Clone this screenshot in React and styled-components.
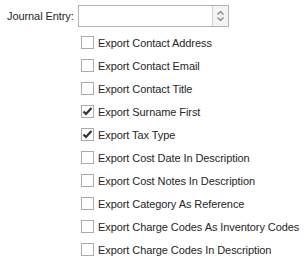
import React from "react";
import styled, { createGlobalStyle } from "styled-components";

const Global = createGlobalStyle`
  html, body { margin: 0; padding: 0; background: #fff; }
  body { font-family: "Liberation Sans", Arial, sans-serif; font-size: 11px; color: #262626; letter-spacing: -0.08px; }
`;

const Page = styled.div`
  padding: 5px 0 0 7px;
  display: flex;
  flex-direction: column;
`;

const FieldRow = styled.div`
  display: flex;
  align-items: center;
  height: 22px;
`;

const Label = styled.label`
  width: 71px;
`;

const SpinBox = styled.div`
  width: 151px;
  height: 22px;
  box-sizing: border-box;
  border: 1px solid #b4b4b4;
  display: flex;
  background: #fff;
`;

const SpinInput = styled.div`
  flex: 1;
`;

const SpinButtons = styled.div`
  width: 15px;
  border-left: 1px solid #d0d0d0;
  background: #f4f4f4;
  display: flex;
  flex-direction: column;
  align-items: center;
  justify-content: center;
  gap: 2px;
`;

const List = styled.div`
  display: flex;
  flex-direction: column;
  padding: 9px 0 0 74px;
  gap: 10px;
`;

const CheckRow = styled.div`
  display: flex;
  align-items: center;
  height: 13px;
  gap: 4px;
  white-space: nowrap;
`;

const Box = styled.span`
  width: 13px;
  height: 13px;
  box-sizing: border-box;
  border: 1px solid #ababab;
  background: #fff;
  display: flex;
  align-items: center;
  justify-content: center;
  flex: none;
`;

const Chevron = ({ up }) => (
  <svg width="7" height="4" viewBox="0 0 7 4">
    <path
      d={up ? "M0.5 3.5 L3.5 0.5 L6.5 3.5" : "M0.5 0.5 L3.5 3.5 L6.5 0.5"}
      fill="none"
      stroke="#8a8a8a"
      strokeWidth="1.4"
    />
  </svg>
);

const Check = () => (
  <svg width="11" height="11" viewBox="0 0 11 11">
    <path d="M1.5 5.5 L4 8 L9.5 2" fill="none" stroke="#333" strokeWidth="2.2" />
  </svg>
);

const items = [
  ["Export Contact Address", false],
  ["Export Contact Email", false],
  ["Export Contact Title", false],
  ["Export Surname First", true],
  ["Export Tax Type", true],
  ["Export Cost Date In Description", false],
  ["Export Cost Notes In Description", false],
  ["Export Category As Reference", false],
  ["Export Charge Codes As Inventory Codes", false],
  ["Export Charge Codes In Description", false],
];

export default function App() {
  return (
    <>
      <Global />
      <Page>
        <FieldRow>
          <Label>Journal Entry:</Label>
          <SpinBox>
            <SpinInput />
            <SpinButtons>
              <Chevron up />
              <Chevron />
            </SpinButtons>
          </SpinBox>
        </FieldRow>
        <List>
          {items.map(([t, c]) => (
            <CheckRow key={t}>
              <Box>{c && <Check />}</Box>
              <span>{t}</span>
            </CheckRow>
          ))}
        </List>
      </Page>
    </>
  );
}
